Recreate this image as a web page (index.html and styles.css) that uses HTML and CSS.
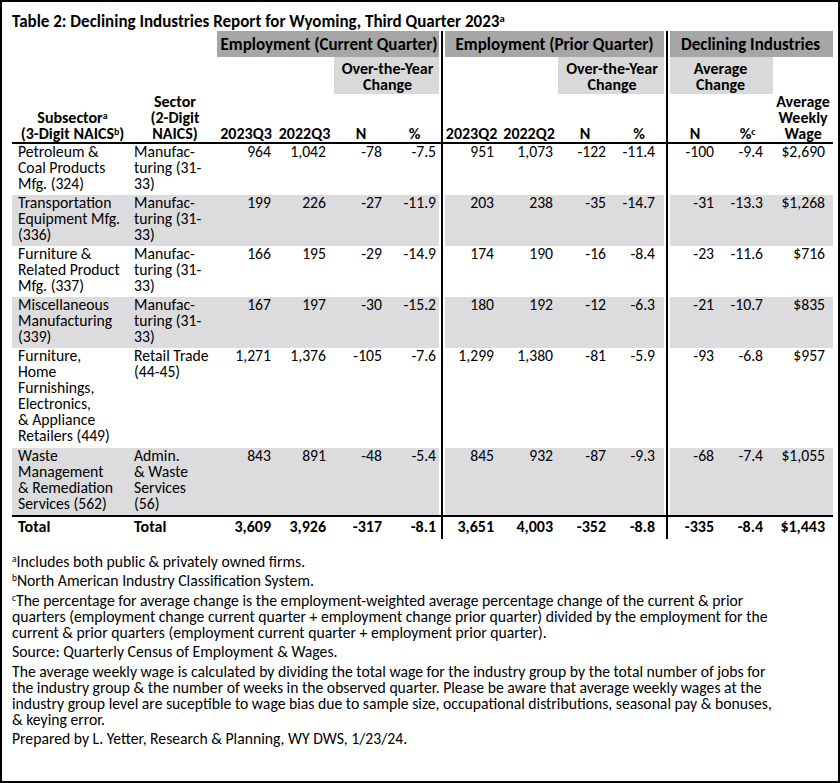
FILE: index.html
```html
<!DOCTYPE html>
<html lang="en">
<head>
<meta charset="utf-8">
<title>Declining Industries Report for Wyoming</title>
<link rel="stylesheet" href="styles.css">
</head>
<body>
<div class="frame">
  <h1 class="title">Table 2: Declining Industries Report for Wyoming, Third Quarter 2023<sup>a</sup></h1>
  <table class="report">
    <colgroup>
      <col class="w-sub"><col class="w-sec"><col class="w-c3"><col class="w-c4"><col class="w-c5"><col class="w-c6"><col class="w-c7"><col class="w-c8"><col class="w-c9"><col class="w-c10"><col class="w-c11"><col class="w-c12"><col class="w-c13">
    </colgroup>
    <thead>
      <tr class="row-a">
        <td colspan="2"></td>
        <th colspan="4" class="dark gr">Employment (Current Quarter)</th>
        <th colspan="4" class="dark vl gl gr">Employment (Prior Quarter)</th>
        <th colspan="3" class="dark vl gl">Declining Industries</th>
      </tr>
      <tr class="row-b">
        <td colspan="4"></td>
        <th colspan="2" class="light gr">Over-the-Year<br>Change</th>
        <td colspan="2" class="vl"></td>
        <th colspan="2" class="light gr">Over-the-Year<br>Change</th>
        <th colspan="2" class="light vl gl">Average<br>Change</th>
        <td></td>
      </tr>
      <tr class="row-c">
        <th>Subsector<sup>a</sup><br>(3-Digit NAICS<sup>b</sup>)</th>
        <th>Sector<br>(2-Digit<br>NAICS)</th>
        <th>2023Q3</th>
        <th>2022Q3</th>
        <th>N</th>
        <th>%</th>
        <th class="vl">2023Q2</th>
        <th>2022Q2</th>
        <th>N</th>
        <th>%</th>
        <th class="vl">N</th>
        <th>%<sup>c</sup></th>
        <th>Average<br>Weekly<br>Wage</th>
      </tr>
    </thead>
    <tbody>
      <tr class="r3">
        <td>Petroleum &amp;<br>Coal Products<br>Mfg. (324)</td>
        <td>Manufac-<br>turing (31-<br>33)</td>
        <td>964</td><td>1,042</td><td>-78</td><td class="gr">-7.5</td>
        <td class="vl gl">951</td><td>1,073</td><td>-122</td><td class="gr">-11.4</td>
        <td class="vl gl">-100</td><td>-9.4</td><td>$2,690</td>
      </tr>
      <tr class="r3 alt">
        <td>Transportation<br>Equipment Mfg.<br>(336)</td>
        <td>Manufac-<br>turing (31-<br>33)</td>
        <td>199</td><td>226</td><td>-27</td><td class="gr">-11.9</td>
        <td class="vl gl">203</td><td>238</td><td>-35</td><td class="gr">-14.7</td>
        <td class="vl gl">-31</td><td>-13.3</td><td>$1,268</td>
      </tr>
      <tr class="r3">
        <td>Furniture &amp;<br>Related Product<br>Mfg. (337)</td>
        <td>Manufac-<br>turing (31-<br>33)</td>
        <td>166</td><td>195</td><td>-29</td><td class="gr">-14.9</td>
        <td class="vl gl">174</td><td>190</td><td>-16</td><td class="gr">-8.4</td>
        <td class="vl gl">-23</td><td>-11.6</td><td>$716</td>
      </tr>
      <tr class="r3 alt">
        <td>Miscellaneous<br>Manufacturing<br>(339)</td>
        <td>Manufac-<br>turing (31-<br>33)</td>
        <td>167</td><td>197</td><td>-30</td><td class="gr">-15.2</td>
        <td class="vl gl">180</td><td>192</td><td>-12</td><td class="gr">-6.3</td>
        <td class="vl gl">-21</td><td>-10.7</td><td>$835</td>
      </tr>
      <tr class="r6">
        <td>Furniture,<br>Home<br>Furnishings,<br>Electronics,<br>&amp; Appliance<br>Retailers (449)</td>
        <td>Retail Trade<br>(44-45)</td>
        <td>1,271</td><td>1,376</td><td>-105</td><td class="gr">-7.6</td>
        <td class="vl gl">1,299</td><td>1,380</td><td>-81</td><td class="gr">-5.9</td>
        <td class="vl gl">-93</td><td>-6.8</td><td>$957</td>
      </tr>
      <tr class="r4 alt">
        <td>Waste<br>Management<br>&amp; Remediation<br>Services (562)</td>
        <td>Admin.<br>&amp; Waste<br>Services<br>(56)</td>
        <td>843</td><td>891</td><td>-48</td><td class="gr">-5.4</td>
        <td class="vl gl">845</td><td>932</td><td>-87</td><td class="gr">-9.3</td>
        <td class="vl gl">-68</td><td>-7.4</td><td>$1,055</td>
      </tr>
      <tr class="total">
        <td>Total</td>
        <td>Total</td>
        <td>3,609</td><td>3,926</td><td>-317</td><td>-8.1</td>
        <td class="vl">3,651</td><td>4,003</td><td>-352</td><td>-8.8</td>
        <td class="vl">-335</td><td>-8.4</td><td>$1,443</td>
      </tr>
    </tbody>
  </table>
  <div class="notes">
    <p><sup>a</sup>Includes both public &amp; privately owned firms.</p>
    <p><sup>b</sup>North American Industry Classification System.</p>
    <p><sup>c</sup>The percentage for average change is the employment-weighted average percentage change of the current &amp; prior<br>quarters (employment change current quarter + employment change prior quarter) divided by the employment for the<br>current &amp; prior quarters (employment current quarter + employment prior quarter).</p>
    <p>Source: Quarterly Census of Employment &amp; Wages.</p>
    <p>The average weekly wage is calculated by dividing the total wage for the industry group by the total number of jobs for<br>the industry group &amp; the number of weeks in the observed quarter. Please be aware that average weekly wages at the<br>industry group level are suceptible to wage bias due to sample size, occupational distributions, seasonal pay &amp; bonuses,<br>&amp; keying error.</p>
    <p>Prepared by L. Yetter, Research &amp; Planning, WY DWS, 1/23/24.</p>
  </div>
</div>
</body>
</html>
```
FILE: styles.css
```css
* { box-sizing: border-box; }

html, body {
  margin: 0;
  padding: 0;
  background: #fff;
}

body {
  font-family: Carlito, Calibri, Lato, "Liberation Sans", sans-serif;
  font-size: 15.7px;
  color: #000;
}

.frame {
  width: 840px;
  height: 783px;
  border: 2px solid #000;
  padding: 10px 5px 0 10px;
  overflow: hidden;
}

sup {
  font-size: 0.62em;
  line-height: 0;
  vertical-align: 0.45em;
}

.title {
  margin: 0;
  height: 19px;
  font-size: 17px;
  line-height: 20px;
  font-weight: bold;
  white-space: nowrap;
}

.report {
  width: 821px;
  table-layout: fixed;
  border-collapse: separate;
  border-spacing: 0;
}

.w-sub { width: 121px; }
.w-sec { width: 84px; }
.w-c3 { width: 58px; }
.w-c4 { width: 59px; }
.w-c5 { width: 54px; }
.w-c6 { width: 53px; }
.w-c7 { width: 59px; }
.w-c8 { width: 58px; }
.w-c9 { width: 54px; }
.w-c10 { width: 54px; }
.w-c11 { width: 56px; }
.w-c12 { width: 51px; }
.w-c13 { width: 60px; }

.report th,
.report td {
  padding: 0;
  white-space: nowrap;
}

.report th {
  font-weight: bold;
  font-size: 16px;
  text-align: center;
  line-height: 16px;
}

.vl { border-left: 2px solid #000; }
.gl { box-shadow: inset 2px 0 #fff; }
.gr { box-shadow: inset -2px 0 #fff; }
.gl.gr { box-shadow: inset 2px 0 #fff, inset -2px 0 #fff; }

.dark { background: #a6a6a6; }
.light { background: #d9d9d9; }

.row-a { height: 26px; }
.row-a th {
  vertical-align: middle;
  padding-top: 1px;
  font-size: 17px;
  line-height: 20px;
}

.row-b { height: 37px; }
.row-b th { vertical-align: top; padding-top: 4px; }

.row-c { height: 50px; }
.row-c th {
  vertical-align: bottom;
  padding-bottom: 0;
  border-bottom: 2px solid #000;
  line-height: 16px;
}

tbody td {
  vertical-align: top;
  text-align: right;
  line-height: 16px;
  padding-top: 3px;
  padding-bottom: 0;
}

.r3 { height: 51px; }
.r6 { height: 100px; }
.r4 { height: 67px; }

tbody .alt td { background-color: #dcdcdf; }

tbody td:nth-child(1) { text-align: left; padding-left: 6px; }
tbody td:nth-child(2) { text-align: left; padding-left: 1px; }
tbody td:nth-child(3) { padding-right: 4px; }
tbody td:nth-child(4) { padding-right: 8px; }
tbody td:nth-child(5) { padding-right: 6px; }
tbody td:nth-child(6) { padding-right: 5px; }
tbody td:nth-child(7) { padding-right: 6px; }
tbody td:nth-child(8) { padding-right: 5px; }
tbody td:nth-child(9) { padding-right: 6px; }
tbody td:nth-child(10) { padding-right: 11px; }
tbody td:nth-child(11) { padding-right: 8px; }
tbody td:nth-child(12) { padding-right: 10px; }
tbody td:nth-child(13) { padding-right: 8px; }

tbody .total td {
  font-weight: bold;
  font-size: 16px;
  border-top: 2px solid #000;
  height: 24px;
  padding-top: 2px;
  padding-bottom: 4px;
}

tbody .total td.vl { border-left: 2px solid #000; }

.notes {
  margin-top: 15px;
  line-height: 16px;
}

.notes p {
  margin: 0 0 3.4px 0;
  white-space: nowrap;
}

.notes sup {
  font-size: 0.6em;
  vertical-align: 0.55em;
}
```
